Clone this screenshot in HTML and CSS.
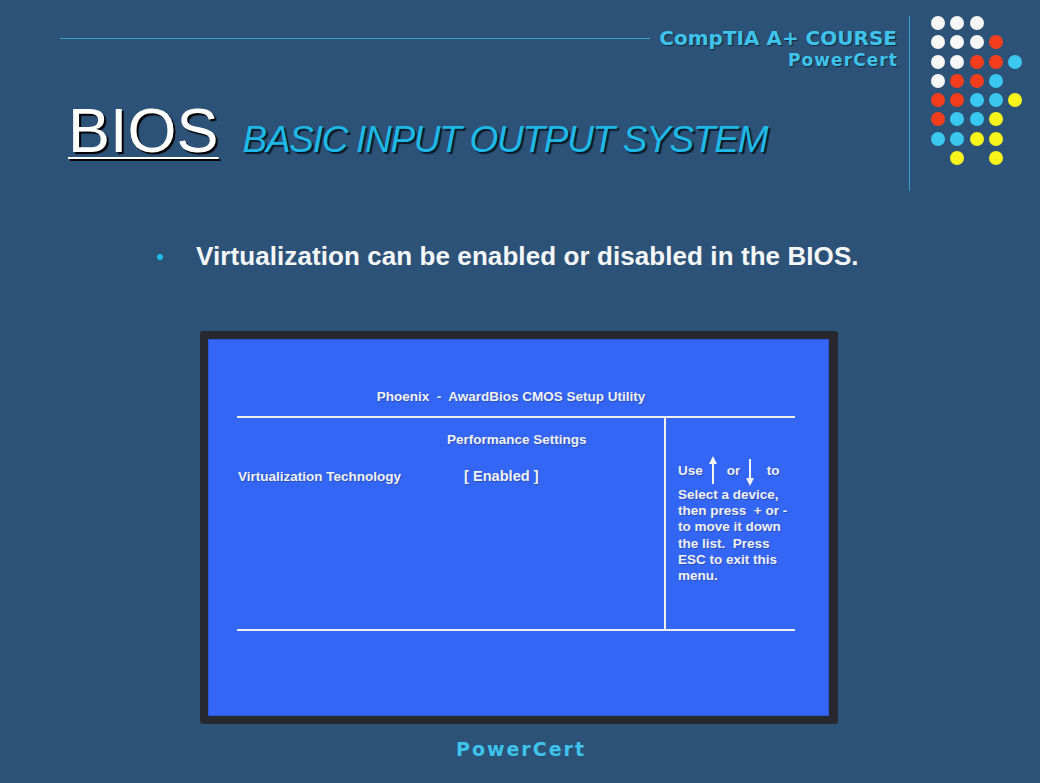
FILE: index.html
```html
<!DOCTYPE html>
<html lang="en">
<head>
<meta charset="utf-8">
<title>BIOS - Basic Input Output System</title>
<link rel="stylesheet" href="styles.css">
</head>
<body>
<div class="slide">
  <header class="top">
    <div class="head-main">
      <div class="brand-row">
        <div class="rule"></div>
        <div class="brand">CompTIA A+ COURSE</div>
      </div>
      <div class="brand-sub">PowerCert</div>
      <div class="title-row">
        <h1 class="bios">BIOS</h1>
        <div class="subtitle">BASIC INPUT OUTPUT SYSTEM</div>
      </div>
    </div>
    <div class="vrule"></div>
    <div class="dots">
      <span class="w"></span><span class="w"></span><span class="w"></span><span></span><span></span>
      <span class="w"></span><span class="w"></span><span class="w"></span><span class="r"></span><span></span>
      <span class="w"></span><span class="w"></span><span class="r"></span><span class="r"></span><span class="b"></span>
      <span class="w"></span><span class="r"></span><span class="r"></span><span class="b"></span><span></span>
      <span class="r"></span><span class="r"></span><span class="b"></span><span class="b"></span><span class="y"></span>
      <span class="r"></span><span class="b"></span><span class="b"></span><span class="y"></span><span></span>
      <span class="b"></span><span class="b"></span><span class="y"></span><span class="y"></span><span></span>
      <span></span><span class="y"></span><span></span><span class="y"></span><span></span>
    </div>
  </header>

  <div class="bullet-row">
    <span class="bullet"></span>
    <p class="bullet-text">Virtualization can be enabled or disabled in the BIOS.</p>
  </div>

  <div class="monitor">
    <div class="screen">
      <div class="bios-table">
        <div class="bios-head">Phoenix&nbsp; -&nbsp; AwardBios CMOS Setup Utility</div>
        <div class="bios-body">
          <div class="col-left">
            <div class="perf">Performance Settings</div>
            <div class="setting">
              <span class="label">Virtualization Technology</span>
              <span class="value">[ Enabled ]</span>
            </div>
          </div>
          <div class="col-right">
            <div class="nav">
              <span>Use</span>
              <svg class="arrow up" width="10" height="30" viewBox="0 0 10 30" aria-hidden="true">
                <line x1="5" y1="6" x2="5" y2="28" stroke="#f2f4f8" stroke-width="2"/>
                <polygon points="1,8 5,0 9,8" fill="#f2f4f8"/>
              </svg>
              <span class="or">or</span>
              <svg class="arrow down" width="10" height="30" viewBox="0 0 10 30" aria-hidden="true">
                <line x1="5" y1="3" x2="5" y2="24" stroke="#f2f4f8" stroke-width="2"/>
                <polygon points="1,22 5,30 9,22" fill="#f2f4f8"/>
              </svg>
              <span class="to">to</span>
            </div>
            <div class="help">Select a device,<br>then press&nbsp; + or -<br>to move it down<br>the list.&nbsp; Press<br>ESC to exit this<br>menu.</div>
          </div>
        </div>
      </div>
    </div>
  </div>

  <div class="footer">PowerCert</div>
</div>
</body>
</html>
```

FILE: styles.css
```css
* { box-sizing: border-box; }

html, body {
  margin: 0;
  padding: 0;
  background: #2c5277;
}

.slide {
  width: 1040px;
  height: 783px;
  overflow: hidden;
  background: #2c5277;
  font-family: "Liberation Sans", Arial, sans-serif;
}

/* ---------- header ---------- */
.top {
  display: flex;
  align-items: flex-start;
}

.head-main {
  margin-left: 60px;
  width: 837px;
  padding-top: 28px;
}

.brand-row {
  display: flex;
  align-items: center;
  height: 20px;
}

.rule {
  flex: 1;
  height: 1px;
  background: #3aa3d4;
  margin-right: 9px;
}

.brand {
  font-family: "DejaVu Sans", "Liberation Sans", sans-serif;
  font-weight: 700;
  font-size: 20px;
  line-height: 20px;
  color: #3ec3ec;
  text-shadow: 1px 1px 1px #15263a;
  white-space: nowrap;
}

.brand-sub {
  margin-top: 4px;
  text-align: right;
  font-family: "DejaVu Sans", "Liberation Sans", sans-serif;
  font-weight: 700;
  font-size: 17px;
  line-height: 17px;
  letter-spacing: 1.1px;
  margin-right: -1.1px;
  color: #3ec3ec;
  text-shadow: 1px 1px 1px #15263a;
}

.title-row {
  margin-top: 30px;
  display: flex;
  align-items: baseline;
}

.bios {
  margin: 0 0 0 8px;
  font-weight: 400;
  font-size: 63px;
  line-height: 62px;
  color: #ffffff;
  text-decoration: underline;
  text-decoration-thickness: 2px;
  text-underline-offset: 5px;
  text-shadow: 2px 2px 1px #000000;
}

.subtitle {
  margin-left: 24px;
  font-style: italic;
  font-size: 37px;
  line-height: 37px;
  letter-spacing: -1.3px;
  color: #1db9e8;
  text-shadow: 2px 2px 1px #0c1a28;
  white-space: nowrap;
}

.vrule {
  margin-top: 16px;
  margin-left: 12px;
  width: 1px;
  height: 175px;
  background: #3a9fd0;
}

.dots {
  margin-top: 16px;
  margin-left: 21px;
  display: grid;
  grid-template-columns: repeat(5, 14px);
  grid-auto-rows: 14px;
  gap: 5.25px;
}

.dots span {
  width: 14px;
  height: 14px;
  border-radius: 50%;
}

.dots .w { background: #f7f7f7; }
.dots .r { background: #f43d1c; }
.dots .b { background: #3bc8f0; }
.dots .y { background: #f6f41a; }

/* ---------- bullet ---------- */
.bullet-row {
  margin-top: 50px;
  display: flex;
  align-items: center;
  height: 30px;
}

.bullet {
  margin-left: 157px;
  margin-right: 33px;
  margin-top: 2px;
  width: 6px;
  height: 6px;
  border-radius: 50%;
  background: #1fbbe9;
}

.bullet-text {
  margin: 0;
  font-weight: 700;
  font-size: 26px;
  line-height: 30px;
  letter-spacing: 0.08px;
  color: #f5f7fa;
  white-space: nowrap;
}

/* ---------- BIOS monitor ---------- */
.monitor {
  margin-top: 60px;
  margin-left: 200px;
  width: 638px;
  height: 393px;
  padding: 8px 9px 8px 8px;
  background: #27292e;
  border-radius: 3px;
}

.screen {
  height: 100%;
  background: #3466f5;
  padding: 50px 0 0 29px;
  box-shadow: inset 0 0 0 1px #2d55d8;
}

.bios-table {
  width: 558px;
  color: #f0f2f6;
  font-weight: 700;
  font-size: 13.5px;
  line-height: 16px;
  text-shadow: 1px 1px 0 rgba(20, 30, 70, 0.35);
}

.bios-head {
  text-align: center;
  padding-right: 10px;
  white-space: nowrap;
}

.bios-body {
  margin-top: 11px;
  height: 215px;
  display: flex;
  border-top: 2px solid #eef0f6;
  border-bottom: 2px solid #eef0f6;
}

.col-left {
  width: 429px;
  border-right: 2px solid #eef0f6;
  padding-top: 14px;
}

.perf {
  padding-left: 210px;
  white-space: nowrap;
}

.setting {
  margin-top: 20px;
  display: flex;
  align-items: baseline;
  padding-left: 1px;
}

.setting .label {
  width: 226px;
}

.setting .value {
  font-size: 14.6px;
}

.col-right {
  flex: 1;
  padding: 38px 0 0 12px;
}

.nav {
  display: flex;
  align-items: center;
  height: 30px;
}

.arrow { display: block; }
.arrow.up { margin-left: 5px; }
.nav .or { margin-left: 9px; }
.arrow.down { margin-left: 4.5px; }
.nav .to { margin-left: 12px; }

.help {
  margin-top: 1px;
  line-height: 16.2px;
  white-space: nowrap;
}

/* ---------- footer ---------- */
.footer {
  margin-top: 16px;
  text-align: center;
  font-family: "DejaVu Sans", "Liberation Sans", sans-serif;
  font-weight: 700;
  font-size: 19px;
  line-height: 19px;
  letter-spacing: 2px;
  padding-left: 2px;
  color: #3ec3ec;
}
```
